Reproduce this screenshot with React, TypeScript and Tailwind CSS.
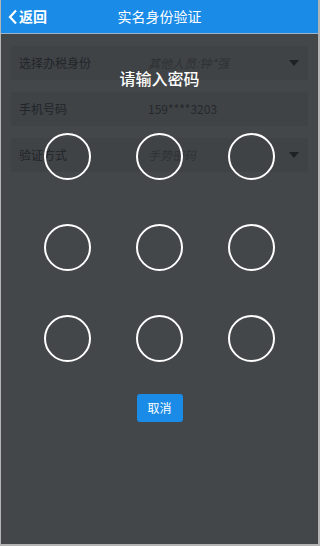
import React from 'react';

const Row: React.FC<{ label: string; value: string; italic?: boolean; select?: boolean }> = ({ label, value, italic, select }) => (
  <div className="flex items-center h-[34px] mx-[10px] px-[8px] rounded-[3px] bg-[#3f4346]">
    <span className="w-[129px] text-[12px] text-[#222529]">{label}</span>
    <span className={`flex-1 text-[12px] ${italic ? 'italic text-[#2e3235]' : 'text-[#25282b]'}`}>{value}</span>
    {select && (
      <svg width="10" height="6" viewBox="0 0 10 6" className="mr-[1px]">
        <path d="M0 0h10L5 6z" fill="#1f2225" />
      </svg>
    )}
  </div>
);

const App: React.FC = () => {
  const dots = Array.from({ length: 9 });

  return (
    <div
      className="w-[320px] h-[546px] flex flex-col overflow-hidden border-l border-r-2 border-b-2 border-[#b4b4b4] bg-[#43474a]"
      style={{ fontFamily: '"Noto Sans CJK SC", "Noto Sans", sans-serif' }}
    >
      {/* header */}
      <div className="h-[33px] shrink-0 bg-[#1a8ce8] flex items-center relative">
        <div className="flex items-center pl-[7px] text-white text-[14px] font-bold">
          <svg width="10" height="16" viewBox="0 0 10 16">
            <path d="M8 1.5L2 8l6 6.5" stroke="#fff" strokeWidth="2.2" fill="none" />
          </svg>
          <span className="ml-[1px]">返回</span>
        </div>
        <span className="absolute left-1/2 -translate-x-1/2 text-white text-[14px]">实名身份验证</span>
      </div>
      <div className="h-[1px] shrink-0 bg-[#9fb4c6]" />

      {/* page under the overlay */}
      <div className="flex-1 relative">
        <div className="flex flex-col gap-[12px] pt-[12px]">
          <Row label="选择办税身份" value="其他人员:钟*强" italic select />
          <Row label="手机号码" value="159****3203" />
          <Row label="验证方式" value="手势密码" italic select />
        </div>

        {/* gesture password overlay */}
        <div className="absolute inset-0 flex flex-col items-center pt-[32px]">
          <div className="text-white text-[16px] font-medium leading-[24px]">请输入密码</div>
          <div className="grid grid-cols-3 gap-x-[45px] gap-y-[44px] mt-[43px]">
            {dots.map((_, i) => (
              <div key={i} className="w-[47px] h-[47px] rounded-full border-[2.5px] border-white" />
            ))}
          </div>
          <button className="mt-[32px] w-[46px] h-[28px] rounded-[3px] bg-[#1a8ce8] text-white text-[12px]">
            取消
          </button>
        </div>
      </div>
    </div>
  );
};

export default App;
